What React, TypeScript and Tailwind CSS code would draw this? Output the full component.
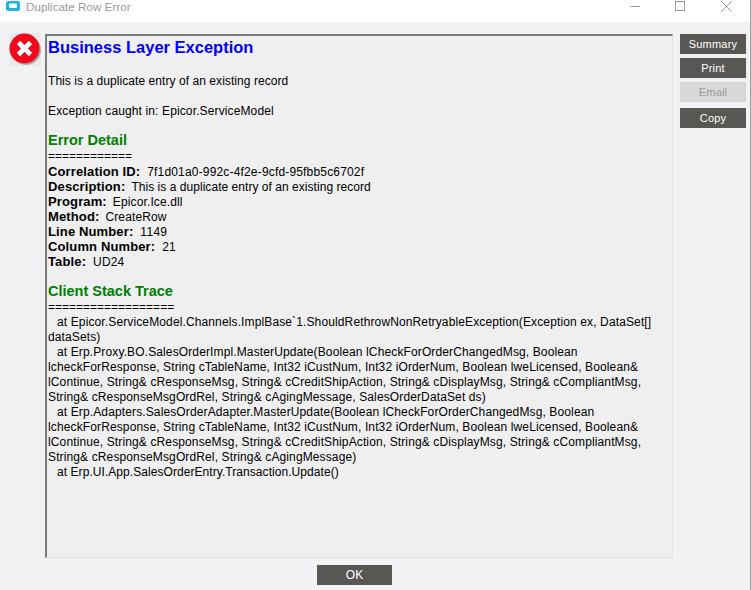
const DETAILS = [
  { label: 'Correlation ID:', value: '7f1d01a0-992c-4f2e-9cfd-95fbb5c6702f', cls: 'ml-[7px] tracking-[0.17px]' },
  { label: 'Description:', value: 'This is a duplicate entry of an existing record', cls: 'ml-[6px] tracking-[0.04px]' },
  { label: 'Program:', value: 'Epicor.Ice.dll', cls: 'ml-[6px]' },
  { label: 'Method:', value: 'CreateRow', cls: 'ml-[6px]' },
  { label: 'Line Number:', value: '1149', cls: 'ml-[7px] tracking-[0.3px]' },
  { label: 'Column Number:', value: '21', cls: 'ml-[7px]' },
  { label: 'Table:', value: 'UD24', cls: 'ml-[7px]' },
]

const TRACE = [
  { text: 'at Epicor.ServiceModel.Channels.ImplBase`1.ShouldRethrowNonRetryableException(Exception ex, DataSet[]', cls: 'pl-[9px]' },
  { text: 'dataSets)', cls: '' },
  { text: 'at Erp.Proxy.BO.SalesOrderImpl.MasterUpdate(Boolean lCheckForOrderChangedMsg, Boolean', cls: 'pl-[9px]' },
  { text: 'lcheckForResponse, String cTableName, Int32 iCustNum, Int32 iOrderNum, Boolean lweLicensed, Boolean&', cls: '' },
  { text: 'lContinue, String& cResponseMsg, String& cCreditShipAction, String& cDisplayMsg, String& cCompliantMsg,', cls: '' },
  { text: 'String& cResponseMsgOrdRel, String& cAgingMessage, SalesOrderDataSet ds)', cls: '' },
  { text: 'at Erp.Adapters.SalesOrderAdapter.MasterUpdate(Boolean lCheckForOrderChangedMsg, Boolean', cls: 'pl-[9px]' },
  { text: 'lcheckForResponse, String cTableName, Int32 iCustNum, Int32 iOrderNum, Boolean lweLicensed, Boolean&', cls: '' },
  { text: 'lContinue, String& cResponseMsg, String& cCreditShipAction, String& cDisplayMsg, String& cCompliantMsg,', cls: '' },
  { text: 'String& cResponseMsgOrdRel, String& cAgingMessage)', cls: '' },
  { text: 'at Erp.UI.App.SalesOrderEntry.Transaction.Update()', cls: 'pl-[9px] tracking-[0.06px]' },
]

const btnCls = 'h-5 w-[66px] bg-[#595754] text-[11px] tracking-[0.2px] text-white flex items-center justify-center'

function ErrorIcon() {
  return (
    <svg width="32" height="33" viewBox="0 0 32 33" className="mt-[-1px] ml-[9px] shrink-0">
      <rect width="32" height="33" fill="#e9e9eb" />
      <circle cx="17" cy="17" r="15" fill="#a8a8a8" />
      <circle cx="15.5" cy="15.5" r="15" fill="#f00a1c" />
      <path d="M9.5 9.5 L21.5 21.5 M21.5 9.5 L9.5 21.5" stroke="#fff" strokeWidth="4.6" strokeLinecap="butt" />
    </svg>
  )
}

export default function App() {
  return (
    <div className="w-[751px] h-[590px] flex flex-col bg-[#f2f2f5] border-r border-[#a0a0a0] font-['Liberation_Sans',Arial,sans-serif] text-[12px] leading-[15px] tracking-[0.125px] text-black overflow-hidden">
      {/* Title bar */}
      <div className="h-[22px] bg-white flex items-start pt-px shrink-0 tracking-normal">
        <svg width="14" height="10" viewBox="0 0 14 10" className="ml-[6px]">
          <rect width="14" height="10" rx="2.5" fill="#1cb4e4" />
          <rect x="3" y="2.5" width="8" height="4.5" rx="1" fill="#fff" />
        </svg>
        <span className="ml-[6px] text-[11.7px] leading-[12px] text-[#9a9a9a]">Duplicate Row Error</span>
        <div className="ml-auto flex items-start">
          <div className="mt-[5px] w-[10px] h-px bg-[#9a9a9a]" />
          <div className="ml-[35px] w-[10px] h-[10px] border border-[#9a9a9a]" />
          <svg width="11" height="11" viewBox="0 0 11 11" className="ml-[36px] mr-[18px]">
            <path d="M0.5 0.5 L10.5 10.5 M10.5 0.5 L0.5 10.5" stroke="#9a9a9a" strokeWidth="1" fill="none" />
          </svg>
        </div>
      </div>

      <div className="flex pt-3 flex-1 min-h-0">
        <ErrorIcon />
        {/* Message panel */}
        <div className="ml-[4px] w-[628px] h-[524px] bg-[#efefef] border-2 border-r border-b border-[#7d7d7d] border-r-[#e3e3e3] border-b-[#e3e3e3] pl-[1px] pt-[1px] shrink-0">
          <div className="text-[16.5px] leading-[21px] font-bold tracking-normal text-[#0000ff]">Business Layer Exception</div>
          <div className="mt-[16px] tracking-[0.06px]">This is a duplicate entry of an existing record</div>
          <div className="mt-[15px]">Exception caught in: Epicor.ServiceModel</div>
          <div className="mt-[13px] text-[14.5px] leading-[17px] font-bold tracking-normal text-[#008000]">Error Detail</div>
          <div className="tracking-normal">============</div>
          {DETAILS.map((d) => (
            <div key={d.label} className="h-[15px] flex items-baseline">
              <span className="font-bold text-[13px] tracking-[0.13px]">{d.label}</span>
              <span className={d.cls}>{d.value}</span>
            </div>
          ))}
          <div className="mt-[14px] text-[14.5px] leading-[17px] font-bold tracking-normal text-[#008000]">Client Stack Trace</div>
          <div className="tracking-normal">==================</div>
          {TRACE.map((line, i) => (
            <div key={i} className={`whitespace-pre ${line.cls}`}>
              {line.text}
            </div>
          ))}
        </div>

        {/* Side buttons */}
        <div className="ml-[7px] flex flex-col">
          <button className={btnCls}>Summary</button>
          <button className={`${btnCls} mt-1`}>Print</button>
          <button className="mt-1 h-5 w-[66px] bg-[#d8d8d8] text-[11px] tracking-[0.2px] text-[#999999] flex items-center justify-center">
            Email
          </button>
          <button className={`${btnCls} mt-[6px]`}>Copy</button>
        </div>
      </div>

      <div className="h-[32px] flex shrink-0 pt-[7px] pl-[317px]">
        <button className="h-5 w-[75px] bg-[#595754] text-[12px] tracking-normal text-white flex items-center justify-center">OK</button>
      </div>
    </div>
  )
}
